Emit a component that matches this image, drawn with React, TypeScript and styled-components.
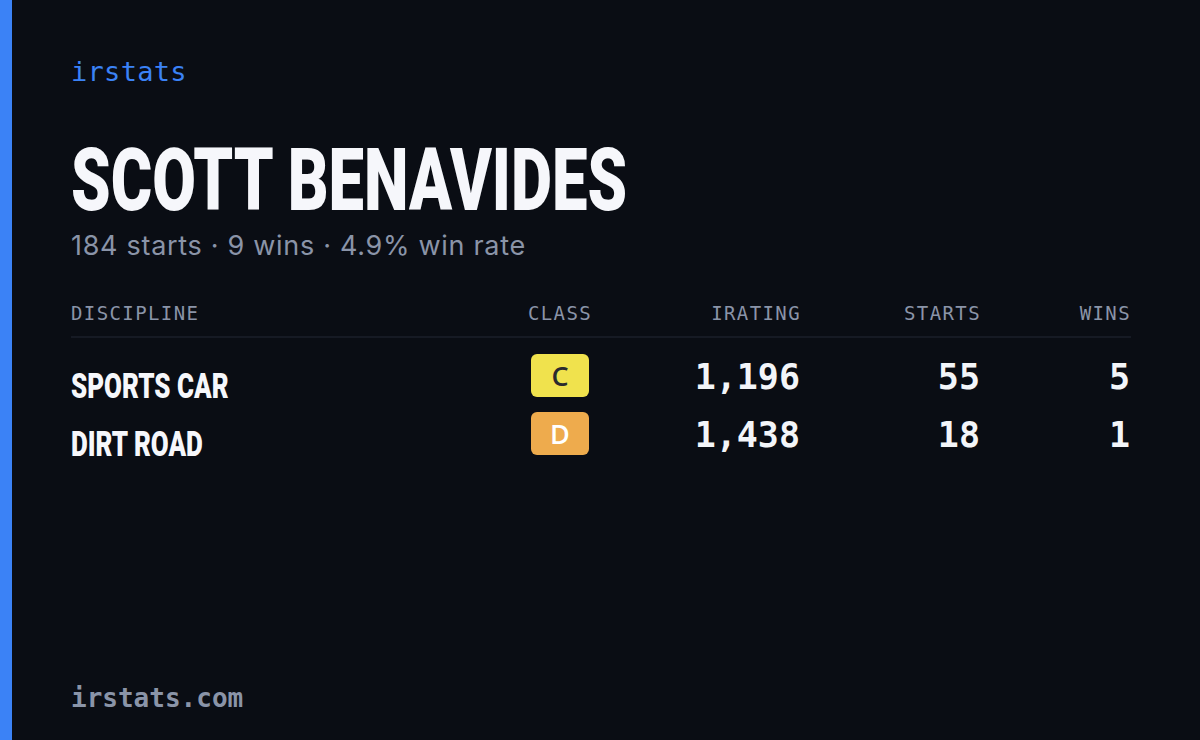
import React from "react";
import styled, { createGlobalStyle } from "styled-components";

const Global = createGlobalStyle`
  html, body { margin: 0; padding: 0; background: #0a0d14; }
  body { width: 1200px; height: 740px; overflow: hidden; }
`;

const Page = styled.div`
  width: 1200px;
  height: 740px;
  display: flex;
  background: #0a0d14;
  box-sizing: border-box;
`;

const Accent = styled.div`
  width: 12px;
  flex: none;
  background: #3b82f6;
`;

const Content = styled.div`
  flex: 1;
  display: flex;
  flex-direction: column;
  padding: 52px 70px 22px 59px;
  box-sizing: border-box;
`;

const Brand = styled.div`
  font-family: "DejaVu Sans Mono", "Liberation Mono", monospace;
  font-size: 27px;
  color: #3b82f6;
  line-height: 40px;
  letter-spacing: 0.3px;
`;

const Title = styled.h1`
  margin: 43px 0 0 0;
  font-family: Roboto, "Liberation Sans", sans-serif;
  font-weight: 900;
  font-size: 88px;
  line-height: 90px;
  color: #f6f7fb;
  white-space: nowrap;
`;

const Condensed = styled.span<{ $scale: number }>`
  display: inline-block;
  transform: scaleX(${(p) => p.$scale});
  transform-origin: left center;
`;

const Subtitle = styled.div`
  margin-top: 4px;
  font-family: Inter, "Open Sans", sans-serif;
  font-size: 27px;
  line-height: 34px;
  color: #8a94a8;
  letter-spacing: 0.7px;
`;

const Table = styled.div`
  margin-top: 39px;
  display: grid;
  grid-template-columns: 1fr 120px 180px 180px 150px;
`;

const HeadCell = styled.div<{ $align: string }>`
  font-family: "DejaVu Sans Mono", "Liberation Mono", monospace;
  font-size: 19px;
  letter-spacing: 1.4px;
  color: #8a94a8;
  text-align: ${(p) => p.$align};
  padding-bottom: 12px;
  border-bottom: 2px solid #161a24;
  margin-right: ${(p) => (p.$align === "right" ? "-1px" : "0")};
`;

const NameCell = styled.div`
  font-family: Roboto, "Liberation Sans", sans-serif;
  font-weight: 900;
  font-size: 35px;
  line-height: 58px;
  height: 58px;
  color: #f6f7fb;
  white-space: nowrap;
  padding-top: 4px;
  box-sizing: border-box;
`;

const ClassCell = styled.div`
  display: flex;
  justify-content: center;
  align-items: flex-start;
  height: 58px;
`;

const Badge = styled.div<{ $bg: string; $fg: string }>`
  width: 58px;
  height: 43px;
  border-radius: 6px;
  background: ${(p) => p.$bg};
  color: ${(p) => p.$fg};
  display: flex;
  align-items: center;
  justify-content: center;
  font-family: "Open Sans", Inter, sans-serif;
  font-weight: 600;
  font-size: 27px;
`;

const NumCell = styled.div`
  font-family: "DejaVu Sans Mono", "Liberation Mono", monospace;
  font-weight: 700;
  font-size: 35px;
  line-height: 46px;
  height: 58px;
  color: #f3f5f9;
  text-align: right;
`;

const BodyStart = styled.div`
  grid-column: 1 / -1;
  height: 16px;
`;

const Spacer = styled.div`
  flex: 1;
`;

const Footer = styled.div`
  font-family: "DejaVu Sans Mono", "Liberation Mono", monospace;
  font-size: 26px;
  font-weight: 600;
  color: #8a94a8;
  line-height: 40px;
`;

const rows = [
  { name: "SPORTS CAR", cls: "C", bg: "#f0e24d", fg: "#2a2a2e", ir: "1,196", starts: "55", wins: "5" },
  { name: "DIRT ROAD", cls: "D", bg: "#eeab4d", fg: "#ffffff", ir: "1,438", starts: "18", wins: "1" },
];

export default function App() {
  return (
    <Page>
      <Global />
      <Accent />
      <Content>
        <Brand>irstats</Brand>
        <Title>
          <Condensed $scale={0.72}>SCOTT BENAVIDES</Condensed>
        </Title>
        <Subtitle>184 starts · 9 wins · 4.9% win rate</Subtitle>
        <Table>
          <HeadCell $align="left">DISCIPLINE</HeadCell>
          <HeadCell $align="center">CLASS</HeadCell>
          <HeadCell $align="right">IRATING</HeadCell>
          <HeadCell $align="right">STARTS</HeadCell>
          <HeadCell $align="right">WINS</HeadCell>
          <BodyStart />
          {rows.map((r) => (
            <React.Fragment key={r.name}>
              <NameCell>
                <Condensed $scale={0.74}>{r.name}</Condensed>
              </NameCell>
              <ClassCell>
                <Badge $bg={r.bg} $fg={r.fg}>{r.cls}</Badge>
              </ClassCell>
              <NumCell>{r.ir}</NumCell>
              <NumCell>{r.starts}</NumCell>
              <NumCell>{r.wins}</NumCell>
            </React.Fragment>
          ))}
        </Table>
        <Spacer />
        <Footer>irstats.com</Footer>
      </Content>
    </Page>
  );
}
